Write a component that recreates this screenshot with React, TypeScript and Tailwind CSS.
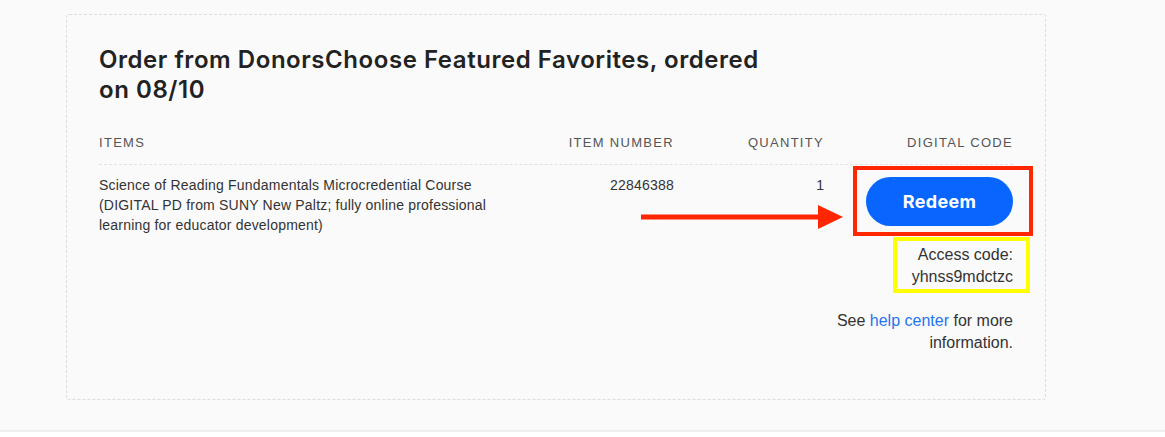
export default function App() {
  return (
    <div className="min-h-[437px] bg-white font-['Liberation_Sans',Arial,sans-serif] text-[#333]">
      <div className="bg-[#fafafa] border-b-2 border-[#efefef] pt-[14px] pb-[30px] pl-[66px] pr-[119px]">
        <div className="border border-dashed border-[#dddddd] rounded-[3px] px-[32px] pt-[30px] pb-[45px]">
          <h2 className="max-w-[680px] font-['Inter',sans-serif] font-semibold text-[24px] leading-[30px] tracking-[0.55px] text-[#222]">
            Order from DonorsChoose Featured Favorites, ordered on 08/10
          </h2>

          <div className="mt-[28px] grid grid-cols-[420px_1fr_150px_189px] border-b border-dashed border-[#e2e2e2] pb-[11px] text-[13px] leading-[20px] tracking-[1.3px] text-[#555]">
            <div>ITEMS</div>
            <div className="text-right">ITEM NUMBER</div>
            <div className="text-right">QUANTITY</div>
            <div className="text-right">DIGITAL CODE</div>
          </div>

          <div className="relative grid grid-cols-[420px_1fr_150px_189px] pt-[10px] text-[14px] leading-[20px]">
            <div className="tracking-[0.2px]">
              Science of Reading Fundamentals Microcredential Course (DIGITAL PD from SUNY New Paltz; fully online professional learning for educator development)
            </div>
            <div className="text-right tracking-[0.2px]">22846388</div>
            <div className="text-right">1</div>
            <div className="flex flex-col items-end">
              <div className="relative mt-[2px]">
                <button className="h-[49px] w-[147px] rounded-full bg-[#0866ff] font-['Inter',sans-serif] text-[18px] font-bold tracking-[0.3px] text-white">
                  Redeem
                </button>
                <div className="absolute -left-[13px] -right-[20px] -top-[11px] -bottom-[10px] border-4 border-[#ff2600]" />
              </div>
              <div className="relative mt-[18px] text-right text-[16px] leading-[22px]">
                <div>Access code:</div>
                <div>yhnss9mdctzc</div>
                <div className="absolute -left-[19px] -right-[17px] -top-[7px] -bottom-[5px] border-4 border-[#ffff00]" />
              </div>
            </div>

            <svg className="absolute left-[542px] top-[40px]" width="202" height="24" viewBox="0 0 202 24">
              <rect x="0" y="9.5" width="180" height="5" fill="#ff2600" />
              <polygon points="177,0 202,12 177,24" fill="#ff2600" />
            </svg>
          </div>

          <p className="mt-[22px] ml-auto w-[190px] text-right text-[16px] leading-[22px]">
            See <a href="#" className="text-[#1f74f0]">help center</a> for more information.
          </p>
        </div>
      </div>
    </div>
  );
}
